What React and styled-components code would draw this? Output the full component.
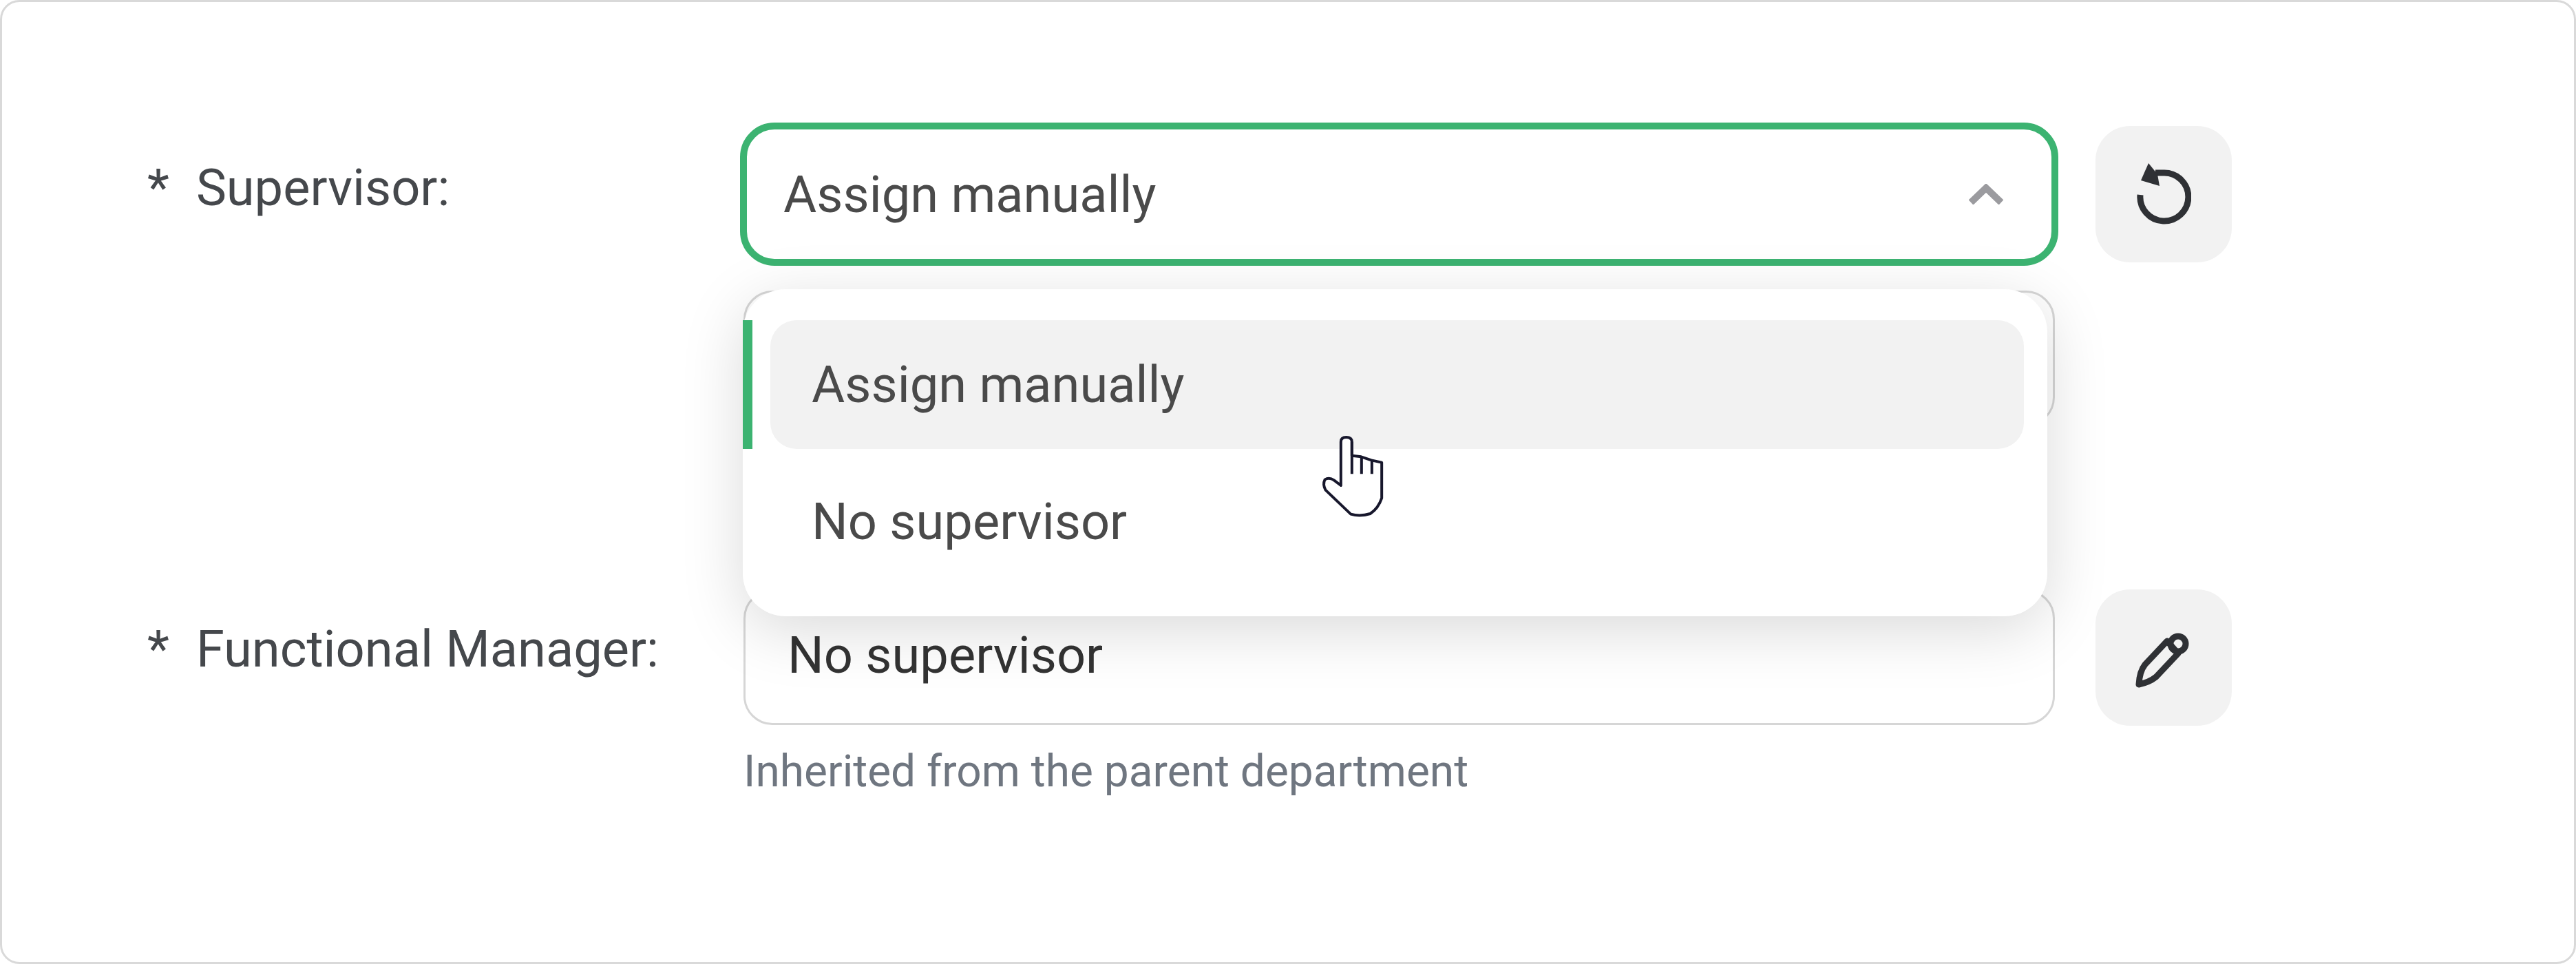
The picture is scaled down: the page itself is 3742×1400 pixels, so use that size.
import React from 'react';
import styled, { createGlobalStyle } from 'styled-components';

const GlobalStyle = createGlobalStyle`
  html, body {
    margin: 0;
    background: #fff;
  }
  * {
    box-sizing: border-box;
  }
`;

const Card = styled.div`
  width: 3742px;
  height: 1400px;
  padding: 175px 0 0 211px;
  background: #fff;
  border: 3px solid #d9d9d9;
  border-radius: 28px;
  font-family: Roboto, 'Liberation Sans', sans-serif;
  overflow: hidden;
`;

const Row = styled.div`
  display: grid;
  grid-template-columns: 807px 1915px 198px;
  column-gap: 54px;
  margin-top: ${p => p.$gap || 0}px;
`;

const Label = styled.label`
  display: flex;
  gap: 39px;
  font-size: 74px;
  line-height: 84px;
  padding-top: ${p => p.$top}px;
  color: #45484c;
`;

const FieldWrap = styled.div`
  position: relative;
`;

const Select = styled.div`
  height: 208px;
  padding: 0 70px 0 53px;
  display: flex;
  align-items: center;
  justify-content: space-between;
  border: 10px solid #3cb371;
  border-radius: 50px;
  font-size: 74px;
  color: #4a4a4a;
`;

const Input = styled.div`
  height: 197px;
  margin: 0 5px;
  padding: 0 0 6px 61px;
  display: flex;
  align-items: center;
  border: 3px solid #d6d6d6;
  border-radius: 42px;
  font-size: 74px;
  color: #333;
`;

const Hint = styled.div`
  margin: 30px 5px 0;
  font-size: 64px;
  line-height: 76px;
  color: #6f7680;
`;

const IconButton = styled.div`
  position: relative;
  z-index: 2;
  width: 198px;
  height: 198px;
  align-self: ${p => p.$align || 'center'};
  display: flex;
  align-items: center;
  justify-content: center;
  background: #f2f2f2;
  border-radius: 50px;
`;

const Dropdown = styled.div`
  position: absolute;
  z-index: 1;
  top: 242px;
  left: 4px;
  width: 1895px;
  height: 475px;
  padding: 45px 34px 0 40px;
  display: flex;
  flex-direction: column;
  gap: 12px;
  background: #fff;
  border-radius: 62px;
  box-shadow: 0 20px 90px rgba(0, 0, 0, 0.15);
`;

const ActiveBar = styled.div`
  position: absolute;
  left: 0;
  top: 45px;
  width: 14px;
  height: 187px;
  background: #3cb371;
`;

const Option = styled.div`
  height: 187px;
  padding-left: 60px;
  display: flex;
  align-items: center;
  border-radius: 38px;
  font-size: 74px;
  color: #4a4a4a;
  background: ${p => (p.$active ? '#f2f2f2' : 'transparent')};
`;

const Pointer = styled.svg`
  position: absolute;
  z-index: 3;
  left: 842px;
  top: 452px;
  width: 97px;
  height: 125px;
`;

const Chevron = () => (
  <svg width="50" height="30" viewBox="0 0 50 30" fill="none">
    <polyline points="3,27 25,6 47,27" stroke="#9b9b9f" strokeWidth="10" />
  </svg>
);

const ResetIcon = () => (
  <svg width="80" height="90" viewBox="0 0 80 90" fill="none">
    <path d="M6 46 A35 35 0 1 0 40 14 L28 14" stroke="#2f3135" strokeWidth="9" />
    <polygon points="18,0 7,25 34,33 31,16" fill="#2f3135" />
  </svg>
);

const PencilIcon = () => (
  <svg width="82" height="88" viewBox="0 0 82 88" fill="none">
    <path
      d="M5 83 Q6 64 14 54 L46 20 L62 38 L30 72 Q20 80 5 83 Z"
      stroke="#2f3135"
      strokeWidth="9"
      strokeLinejoin="round"
    />
    <circle cx="62" cy="24" r="11" stroke="#2f3135" strokeWidth="9" />
  </svg>
);

const HandCursor = () => (
  <Pointer viewBox="200 90 290 375" fill="none">
    <path
      d="M292 305 L292 125 Q292 105 315 105 Q340 105 340 125 L340 185 L380 190 L425 205 L470 215 L470 370 Q455 415 420 438 Q375 452 335 440 L225 335 Q212 310 222 290 Q240 278 262 292 L292 315 Z"
      fill="#fff"
      stroke="#17172c"
      strokeWidth="12"
      strokeLinejoin="round"
    />
    <path d="M340 125 L340 265 M382 195 L382 265 M427 208 L427 265" stroke="#17172c" strokeWidth="12" />
  </Pointer>
);

export default function App() {
  return (
    <>
      <GlobalStyle />
      <Card>
        <Row>
          <Label $top={53}>
            <span>*</span>
            <span>Supervisor:</span>
          </Label>
          <FieldWrap>
            <Select>
              Assign manually
              <Chevron />
            </Select>
            <Dropdown>
              <ActiveBar />
              <Option $active>Assign manually</Option>
              <Option>No supervisor</Option>
            </Dropdown>
            <HandCursor />
          </FieldWrap>
          <IconButton>
            <ResetIcon />
          </IconButton>
        </Row>
        <Row $gap={36}>
          <div />
          <Input />
        </Row>
        <Row $gap={237}>
          <Label $top={45}>
            <span>*</span>
            <span>Functional Manager:</span>
          </Label>
          <div>
            <Input>No supervisor</Input>
            <Hint>Inherited from the parent department</Hint>
          </div>
          <IconButton $align="start">
            <PencilIcon />
          </IconButton>
        </Row>
      </Card>
    </>
  );
}
